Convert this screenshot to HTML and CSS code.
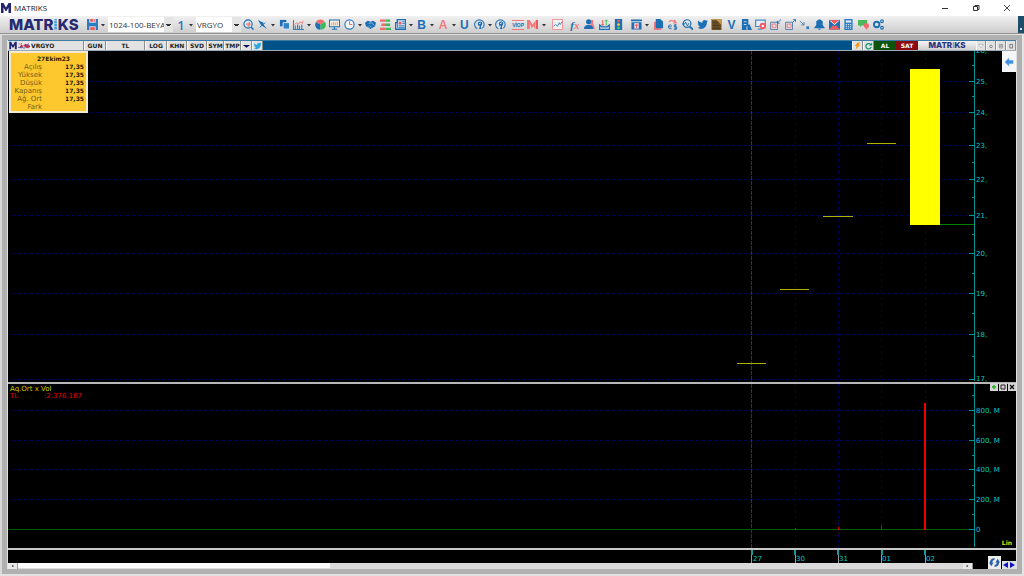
FILE: index.html
```html
<!DOCTYPE html>
<html lang="tr">
<head>
<meta charset="utf-8">
<title>MATRIKS</title>
<link rel="stylesheet" href="styles.css">
</head>
<body>
<svg class="defs" aria-hidden="true">
  <symbol id="caret" viewBox="0 0 4 12"><path d="M0 5h4L2 7.500z" fill="#333"/></symbol>
  <symbol id="m" viewBox="0 0 12 12"><path d="M1 11V1h2.500L6 5.500 8.500 1H11v10H8.500V5.500L6.500 9h-1L3.500 5.500V11z" fill="#22256f"/></symbol>
  <symbol id="bird" viewBox="0 0 12 12"><path d="M0.500 9.300c1.200.2 2.300-.1 3.100-.8C2.600 8.400 1.900 7.700 1.600 6.900h1C1.500 6.600.8 5.600.8 4.500l1 .3C.8 4 .6 2.700 1.200 1.700 2.400 3.200 4 4 5.900 4.200 5.500 2.500 6.700 1 8.300 1c.7 0 1.300.3 1.700.8L11.600 1.200 10.700 2.600 12 2.300 10.900 3.500C11 7.500 8 10.800 4.300 10.800c-1.400 0-2.700-.5-3.800-1.500z" fill="currentColor"/></symbol>
  <symbol id="face" viewBox="0 0 12 12"><path d="M3.500 10.700A5.200 5.200 0 1 1 9 10.200" fill="none" stroke="#3a7fbb" stroke-width="1.300"/><path d="M4 5Q4.500 2.500 7.500 2.800 10 4 8.500 6.500L7.500 8l.5 3H5.500L6.500 7 5 7.500z" fill="#1c6fb5"/><path d="M5.500 5.200l2-1" stroke="#e6eef5" fill="none"/></symbol>
</svg>

<header class="titlebar">
  <svg class="app-icon"><use href="#m"/></svg>
  <span class="app-title">MATRIKS</span>
  <div class="win-buttons">
    <button aria-label="Minimize"><svg viewBox="0 0 12 12"><path d="M3 6.500h6" stroke="#333" fill="none"/></svg></button>
    <button aria-label="Restore"><svg viewBox="0 0 12 12"><path d="M3.500 4.500h4v4h-4zM5 4.500v-1h4v4H8" stroke="#333" fill="none"/></svg></button>
    <button aria-label="Close"><svg viewBox="0 0 12 12"><path d="M3 3l6 6M9 3L3 9" stroke="#333" stroke-width=".9" fill="none"/></svg></button>
  </div>
</header>

<nav class="toolbar" aria-label="Araçlar">
  <div class="brand">MATR<span class="brand-i">I</span>KS</div>
  <div class="pickers">
    <button class="save" aria-label="Kaydet"><svg viewBox="0 0 12 12"><path d="M0 0h2.500v4h7V0H12v12H9.500V8h-7v4H0z" fill="#2b7cc2"/><path d="M3.500 0h3v3h-3zM7.500 0h1v3h-1zM3.500 9h5v3h-5z" fill="#ef5a5f"/><path d="M2 4.500h8v3H2z" fill="#2b7cc2"/></svg></button>
    <button class="caret" aria-label="Menü"><svg><use href="#caret"/></svg></button>
    <select class="picker picker-wide" aria-label="Sayfa"><option>1024-100-BEYAZ</option></select>
    <button class="page-number">1</button>
    <button class="caret" aria-label="Menü"><svg><use href="#caret"/></svg></button>
    <select class="picker picker-symbol" aria-label="Sembol"><option>VRGYO</option></select>
  </div>
  <div class="tools">
    <button aria-label="Büyüt"><svg viewBox="0 0 12 12"><circle cx="5.500" cy="5.500" r="4.500" fill="#dceaf5" stroke="#1c6fb5" stroke-width="1.200"/><path d="M9 9l2.500 2.500" stroke="#1c6fb5" stroke-width="1.600"/><path d="M3.500 5.500h4l-1-2M5 7.500h2.500" stroke="#ef6a6e" fill="none" stroke-width="1.400"/></svg></button>
    <button aria-label="İmleç"><svg viewBox="0 0 12 12"><path d="M1 1l6 3 0 2 4 5-6-4-1-1z" fill="#1c6fb5"/><path d="M9 4L3 9" stroke="#1c6fb5"/></svg></button>
    <button class="caret" aria-label="Menü"><svg><use href="#caret"/></svg></button>
    <button aria-label="Kopyala"><svg viewBox="0 0 12 12"><path d="M1 1h7v7H1z" fill="#1c6fb5"/><path d="M4.500 4h7v7h-7z" fill="#3182c6" stroke="#e8eef4"/></svg></button>
    <button aria-label="Grafik"><svg viewBox="0 0 12 12"><path d="M.5 1v10.500H12M2.500 11V7M5 11V6M7 11V7M9.500 11V6" fill="none" stroke="#3d80b8" stroke-width="1.200"/><path d="M2 6l2-2 2 1.500L8 3l2 2 1-3" stroke="#f0777a" fill="none"/></svg></button>
    <button class="caret" aria-label="Menü"><svg><use href="#caret"/></svg></button>
    <button aria-label="Pasta grafik"><svg viewBox="0 0 12 12"><path d="M6 6L1 3.500A5.500 5.500 0 0 1 10.500 3z" fill="#f06a6e"/><path d="M6 6L1 3.500A5.500 5.500 0 0 0 6 11.800z" fill="#1c6fb5"/><path d="M6 6L10.800 3A5.600 5.600 0 0 1 6 11.800z" fill="#3cba59"/></svg></button>
    <button aria-label="Ekran"><svg viewBox="0 0 12 12"><path d="M.5 1h11v7.500H.5zM6 8.500V11M3 11.300h6" fill="#f6f0e8" stroke="#1c6fb5" stroke-width="1.100"/><path d="M3 7V4M5 7V3M7 7V4M9 7V3" stroke="#ef9c4a"/></svg></button>
    <button aria-label="Zaman"><svg viewBox="0 0 12 12"><circle cx="6" cy="6" r="5" fill="#f3f6f9" stroke="#2b7cc2" stroke-width="1.300"/><path d="M6 2.500V6h3" stroke="#ef5a5f" fill="none"/></svg></button>
    <button class="caret" aria-label="Menü"><svg><use href="#caret"/></svg></button>
    <button aria-label="İşlem"><svg viewBox="0 0 12 12"><path d="M0 4l3-2 3 1 3-1 3 2-1 4-5 3-5-3z" fill="#1c6fb5"/><path d="M4 5l3-1 3 3M3 8l2 2M5 7l2 2" stroke="#cfe0ee" stroke-width=".7" fill="none"/></svg></button>
    <button aria-label="Derinlik"><svg viewBox="0 0 12 12"><path d="M0 .5h6v2.500H0zM1.500 5h4v2.500h-4zM0 9.500h6V12H0z" fill="#f06a6e"/><path d="M6 .5h5v2.500H6zM5.500 5H11v2.500H5.500zM6 9.500h6V12H6z" fill="#3cba59"/></svg></button>
    <button aria-label="Haberler"><svg viewBox="0 0 12 12"><path d="M2.500.7h9v10.500h-11V4h2z" fill="#d7e6f3" stroke="#1c6fb5" stroke-width="1.500"/><path d="M4 3h3v3H4z" fill="#ef5a5f"/><path d="M8 3h2.500M8 5h2.500M4 7.500h6.500M4 9.500h6.500M2.500 4v6" stroke="#1c6fb5"/></svg></button>
    <button class="caret" aria-label="Menü"><svg><use href="#caret"/></svg></button>
    <button class="letter">B</button>
    <button class="caret" aria-label="Menü"><svg><use href="#caret"/></svg></button>
    <button class="letter letter-red">A</button>
    <button class="caret" aria-label="Menü"><svg><use href="#caret"/></svg></button>
    <button class="letter">U</button>
    <button aria-label="Analiz"><svg><use href="#face"/></svg></button>
    <button class="caret" aria-label="Menü"><svg><use href="#caret"/></svg></button>
    <button aria-label="Uzman"><svg><use href="#face"/></svg></button>
    <button class="viop new-group">VİOP</button>
    <button aria-label="Matriks"><svg viewBox="0 0 12 12"><path d="M0 1l3 0 3 5 3-4v9L7 8 5 10 3 5v6H0z" fill="#f07a7d"/><path d="M9.500 1H12v10H9.500z" fill="#ef5a5f"/></svg></button>
    <button class="caret" aria-label="Menü"><svg><use href="#caret"/></svg></button>
    <button class="new-group" aria-label="Gösterge"><svg viewBox="0 0 12 12"><path d="M.5.5h11v11H.5z" fill="#eef1f4" stroke="#ef8a8c"/><path d="M1.500 8L4 6l2 2 2-4 1 2 2-3" stroke="#4a7eae" fill="none"/></svg></button>
    <button class="fx new-group">f<span class="fx-x">x</span></button>
    <button aria-label="Kullanıcılar"><svg viewBox="0 0 12 12"><path d="M7 1h3v4l2 6H7z" fill="#f07a7d"/><circle cx="5" cy="3" r="2.800" fill="#1c6fb5"/><path d="M0 11q0-4 3.500-4.500h3Q10 7 10 11z" fill="#1c6fb5"/></svg></button>
    <button aria-label="Aktarım"><svg viewBox="0 0 12 12"><path d="M.7 6.500v4.800h10.600V6.500L9 8.500H3z" fill="#d5e3ef" stroke="#1c6fb5" stroke-width="1.300"/><path d="M4 1v6M2.500 5.500L4 7l1.500-1.500" stroke="#ef5a5f" fill="none"/><path d="M8 7V1M6.500 2.500L8 1l1.500 1.500" stroke="#3cba59" fill="none"/></svg></button>
    <button aria-label="Durum"><svg viewBox="0 0 12 12"><path d="M2 0h8v12H2z" fill="#1c6fb5"/><circle cx="6" cy="2.300" r="1.500" fill="#f05a5f"/><circle cx="6" cy="6" r="1.500" fill="#f4d53c"/><circle cx="6" cy="9.700" r="1.500" fill="#46c964"/></svg></button>
    <button class="new-group" aria-label="Arşiv"><svg viewBox="0 0 12 12"><path d="M0 .5h12v2H0zM.5 3.500h11v8H.5z" fill="#1c6fb5"/><path d="M3.500 4.500h5v6h-5z" fill="#f3d5d8"/><path d="M6 10V6M4.300 7.500L6 5.700l1.700 1.800" stroke="#ef5a5f" fill="none"/></svg></button>
    <button class="caret" aria-label="Menü"><svg><use href="#caret"/></svg></button>
    <button aria-label="Belgeler"><svg viewBox="0 0 12 12"><path d="M1 3h8v9H1z" fill="#f07a7d"/><path d="M3 0h5l3 3v7H3z" fill="#1c6fb5"/></svg></button>
    <button aria-label="Döviz"><svg viewBox="0 0 12 12"><path d="M2 3q3-3 8 1M8 1l2 3-3 .5" stroke="#f07a7d" fill="none" stroke-width="1.200"/><path d="M5 10.500H2.500Q1 9 2 7q2-1.500 3 .5l-1 1H2M10.500 6.500H8V8.500h2.500V11H7.500M9 5.500V12" stroke="#1c6fb5" fill="none"/></svg></button>
    <button aria-label="Ara"><svg viewBox="0 0 12 12"><circle cx="5.500" cy="5" r="4.200" fill="none" stroke="#1c6fb5" stroke-width="1.300"/><path d="M8.500 8.500L12 11.500" stroke="#1c6fb5" stroke-width="2"/><path d="M0 5.500h3l1-2 2 4 1.500-3" stroke="#1c6fb5" fill="none"/></svg></button>
    <button class="blue" aria-label="Twitter"><svg><use href="#bird"/></svg></button>
    <button aria-label="Resim"><svg viewBox="0 0 12 12"><path d="M0 0h12v12H0z" fill="#c09a4c"/><path d="M1 1h5l5 5v6H1z" fill="#6b5026"/><path d="M2 4h5M2 7h7M2 10h8" stroke="#46351a"/></svg></button>
    <button class="letter">V</button>
    <button aria-label="Şirketler"><svg viewBox="0 0 12 12"><path d="M1 0h7v12H1zM8 6h1.500l2.500 6H8z" fill="#1c6fb5"/><path d="M3 3h3M3 6h3M6.500 12V8" stroke="#cfe0ee"/></svg></button>
    <button aria-label="Ekran kaydı"><svg viewBox="0 0 12 12"><path d="M.7 1.200h10.500v7H.7zM3 11h5" fill="#e4edf5" stroke="#4a8cc4" stroke-width="1.300"/><circle cx="8.500" cy="7.500" r="3.500" fill="#f05a64"/><circle cx="8.500" cy="7.500" r="1.300" fill="#fff"/></svg></button>
    <button aria-label="Küçült"><svg viewBox="0 0 12 12"><path d="M.7 3.500h7.500v8H.7z" fill="#e5dce0" stroke="#4a7eae"/><path d="M2.500 5.500h4v4h-4z" fill="none" stroke="#f07a7d"/><path d="M12 .5L8.500 4M8 2v2.500h2.500" stroke="#1c6fb5" fill="none"/></svg></button>
    <button aria-label="Genişlet"><svg viewBox="0 0 12 12"><path d="M.7 3.500h7.500v8H.7z" fill="#e5dce0" stroke="#4a7eae"/><path d="M2.500 5.500h4v4h-4z" fill="none" stroke="#f07a7d"/><path d="M8 4l3.500-3.500M9 .7h2.500V3" stroke="#1c6fb5" fill="none"/></svg></button>
    <button aria-label="Taşı"><svg viewBox="0 0 12 12"><path d="M1 2l4.500 4.500M5.500 3.500v3H2.500" stroke="#3d80b8" fill="none"/><path d="M8 8h3v3H8z" fill="#2b7cc2"/></svg></button>
    <button aria-label="Alarm"><svg viewBox="0 0 12 12"><path d="M5 .5h2l2.500 2v4L12 10H0l2.500-3.500v-4zM4 10.500h4L6 12z" fill="#1c6fb5"/></svg></button>
    <button aria-label="Mesaj"><svg viewBox="0 0 12 12"><path d="M0 1h12v10.500H0z" fill="#1c6fb5"/><path d="M.5 1.500h11L6 6.500z" fill="#f3f3f3"/><path d="M0 11.500l4.500-5L6 8l1.500-1.500 4.500 5zM1 1l5 4.500L11 1" fill="#ef5a5f"/></svg></button>
    <button aria-label="Hesap makinesi"><svg viewBox="0 0 12 12"><path d="M1.500 0h9v12h-9z" fill="#2b7cc2"/><path d="M3 1.500h6v2.500H3z" fill="#d9e8f4"/><path d="M3 6h6M3 8h6M3 10h6" stroke="#d9e8f4" stroke-dasharray="1.400 .9"/></svg></button>
    <button aria-label="Sohbet"><svg viewBox="0 0 12 12"><path d="M0 1h10v6H4L2 9V7H0z" fill="#4cb85c"/><path d="M7 5q5-1 5 2t-2 3v2L8 10Q5 8 7 5z" fill="#f06a6e"/></svg></button>
    <button aria-label="Ayarlar"><svg viewBox="0 0 12 12"><circle cx="4" cy="6" r="3" fill="none" stroke="#1c6fb5" stroke-width="2"/><circle cx="9.800" cy="2.500" r="1.500" fill="none" stroke="#1c6fb5" stroke-width="1.200"/><circle cx="9.800" cy="9.500" r="1.500" fill="none" stroke="#1c6fb5" stroke-width="1.200"/></svg></button>
  </div>
  <div class="toolbar-grip"></div>
</nav>

<main class="workspace">
  <section class="chart-window">
    <div class="chart-header">
      <svg class="head-m"><use href="#m"/></svg>
      <svg class="head-pair" viewBox="0 0 13 8"><path d="M0 1l2 2 2-2v2L2 5v2h2l2-3 2-2 2 1 3 1v2l-3 1z" fill="#c33049"/><path d="M4 6l3 1 3-4 2-1M0 6h4" stroke="#5a5fae" fill="none"/></svg>
      <button class="cell cell-name">VRGYO</button>
      <button class="cell cell-gun">GUN</button>
      <button class="cell cell-tl">TL</button>
      <button class="cell cell-gun">LOG</button>
      <button class="cell cell-mid">KHN</button>
      <button class="cell cell-mid">SVD</button>
      <button class="cell cell-small">SYM</button>
      <button class="cell cell-small">TMP</button>
      <button class="cell cell-icon" aria-label="Liste"><svg viewBox="0 0 10 8"><path d="M1 3h8L5 6z" fill="#111155"/></svg></button>
      <button class="cell cell-icon sky" aria-label="Paylaş"><svg><use href="#bird"/></svg></button>
      <span class="spacer"></span>
      <button class="cell cell-icon" aria-label="Hızlı emir"><svg viewBox="0 0 10 8"><path d="M5 0h3L6.500 3H8L3 8l1-4H2z" fill="#f29a1f"/></svg></button>
      <button class="cell cell-icon" aria-label="Yenile"><svg viewBox="0 0 10 8"><path d="M7.500 2.500A3 3 0 1 0 8 5" stroke="#159a72" stroke-width="1.400" fill="none"/><path d="M5.500 3.500H9V0z" fill="#159a72"/></svg></button>
      <button class="trade buy">AL</button>
      <button class="trade sell">SAT</button>
      <span class="mini-brand">MATR<span class="mini-i">I</span>KS</span>
      <button class="cell cell-win" aria-label="Menü"><svg viewBox="0 0 10 8"><path d="M2 2h6L5 6z" fill="#fff" stroke="#999" stroke-width=".7"/></svg></button>
      <button class="cell cell-win" aria-label="Simge"><svg viewBox="0 0 10 8"><circle cx="5" cy="4.500" r="1.600" fill="none" stroke="#777"/></svg></button>
      <button class="cell cell-win" aria-label="Büyüt"><svg viewBox="0 0 10 8"><path d="M3 2h4v4.500H3zM5 2v4M3 4h4" fill="none" stroke="#888" stroke-width=".8"/></svg></button>
      <button class="cell cell-win" aria-label="Kapat"><svg viewBox="0 0 10 8"><path d="M3.500 2H7v4.500H3.500z" fill="none" stroke="#666"/></svg></button>
    </div>

    <div class="price-pane">
      <svg class="plot" viewBox="8 51 1008 331" preserveAspectRatio="xMaxYMin" role="img" aria-label="VRGYO fiyat grafiği">
        <g class="grid">
          <path d="M12 81.500H968M12 112.500H968M12 145.500H968M12 179.500H968M12 215.500H968M12 253.500H968M12 293.500H968M12 334.500H968M12 379.500H968"/>
          <path d="M795.500 51V382M838.500 51V382M881.500 51V382M925.500 51V382"/>
        </g>
        <path class="cursor-line" d="M751.500 51V382"/>
        <path class="dash" d="M737 363.500h29M780 289.500h29M823 216.500h30M867 143.500h29"/>
        <rect x="910" y="69" width="30" height="156" fill="#ffff00"/>
        <path d="M940 224.500H974" stroke="#008000"/>
        <path class="axis" d="M974.500 51V381M969 81.500h5M969 112.500h5M969 145.500h5M969 179.500h5M969 215.500h5M969 253.500h5M969 293.500h5M969 334.500h5M969 379.500h5"/>
        <path class="axis" d="M972 65.500h2M972 96.500h2M972 128.500h2M972 162.500h2M972 197.500h2M972 234.500h2M972 273.500h2M972 313.500h2M972 356.500h2"/>
        <g class="scale">
          <text x="976" y="53">26,</text>
          <text x="976" y="84">25,</text>
          <text x="976" y="115">24,</text>
          <text x="976" y="148">23,</text>
          <text x="976" y="182">22,</text>
          <text x="976" y="218">21,</text>
          <text x="976" y="256">20,</text>
          <text x="976" y="296">19,</text>
          <text x="976" y="337">18,</text>
          <text x="976" y="381">17,</text>
        </g>
      </svg>
      <table class="quote-box">
        <caption>27Ekim23</caption>
        <tr><th>Açılış</th><td>17,35</td></tr>
        <tr><th>Yüksek</th><td>17,35</td></tr>
        <tr><th>Düşük</th><td>17,35</td></tr>
        <tr><th>Kapanış</th><td>17,35</td></tr>
        <tr><th>Ağ. Ort</th><td>17,35</td></tr>
        <tr><th>Fark</th><td></td></tr>
      </table>
      <button class="side-toggle" aria-label="Paneli aç"><svg viewBox="0 0 12 12"><path d="M1 6l5-5v3h5v4H6v3z" fill="#3d8fe0" stroke="#8cbcec" stroke-width=".6"/></svg></button>
    </div>

    <div class="volume-pane">
      <svg class="plot" viewBox="8 384 1008 164" preserveAspectRatio="xMaxYMin" role="img" aria-label="Hacim grafiği">
        <g class="grid">
          <path d="M12 410.500H968M12 440.500H968M12 469.500H968M12 499.500H968"/>
          <path d="M795.500 384V548M838.500 384V548M881.500 384V548M925.500 384V548"/>
        </g>
        <path class="cursor-line" d="M751.500 384V548"/>
        <path d="M8 529.500H974" stroke="#005c00"/>
        <path d="M795.500 528v2M838.500 527v3M881.500 525v5" stroke="#e00000"/>
        <path d="M925 403V530" stroke="#f00000" stroke-width="2"/>
        <path class="axis" d="M974.500 384V547M969 410.500h5M969 440.500h5M969 469.500h5M969 499.500h5M969 529.500h5"/>
        <path class="axis" d="M972 395.500h2M972 425.500h2M972 455.500h2M972 485.500h2M972 514.500h2"/>
        <g class="scale">
          <text x="976" y="413">800, M</text>
          <text x="976" y="443">600, M</text>
          <text x="976" y="472">400, M</text>
          <text x="976" y="502">200, M</text>
          <text x="976" y="532">0</text>
        </g>
      </svg>
      <div class="legend">
        <div class="legend-title">Aq.Ort x Vol</div>
        <div class="legend-value"><span class="legend-unit">TL</span><span>:2.376.187</span></div>
      </div>
      <div class="pane-buttons">
        <button aria-label="Ekle"><svg viewBox="0 0 8 8"><path d="M4 2v4M2 4h4" stroke="#19b519" stroke-width="1.400"/></svg></button>
        <button aria-label="Büyüt"><svg viewBox="0 0 8 8"><path d="M2 2h4v4H2z" stroke="#222" fill="none"/></svg></button>
        <button aria-label="Kapat"><svg viewBox="0 0 8 8"><path d="M2 2l4 4M6 2L2 6" stroke="#111" stroke-width="1.400"/></svg></button>
      </div>
      <button class="scale-mode">Lin</button>
    </div>

    <div class="time-pane">
      <svg class="time-axis" viewBox="8 550 1008 13" role="img" aria-label="Tarih ekseni">
        <path d="M751.500 554V563M795.500 554V563M838.500 554V563M881.500 554V563M925.500 554V563" stroke="#999"/>
        <path d="M752 550v5M795 550v5M838 550v5M882 550v5M925 550v5" stroke="#159a9a" stroke-width="2"/>
        <g class="scale">
          <text x="753" y="561">27</text>
          <text x="796" y="561">30</text>
          <text x="839" y="561">31</text>
          <text x="882" y="561">01</text>
          <text x="926" y="561">02</text>
        </g>
      </svg>
      <div class="scroll-row">
        <button aria-label="Sola kaydır"><svg viewBox="0 0 10 6"><path d="M6 1.500v3L4 3z" fill="#222"/></svg></button>
        <div class="track"><div class="thumb"></div></div>
        <button aria-label="Sağa kaydır"><svg viewBox="0 0 10 6"><path d="M4 1.500v3L6 3z" fill="#222"/></svg></button>
      </div>
      <div class="corner">
        <button class="sync" aria-label="Yenile"><svg viewBox="0 0 12 12"><path d="M6 1Q1 1.500 1 6L0 6l2.500 4L5 6H3.500Q3.500 3.500 6 3z" fill="#2b62a8"/><path d="M6 11Q11 10.500 11 6l1 0-2.500-4L7 6h1.500Q8.500 8.500 6 9z" fill="#2b62a8"/></svg></button>
        <button class="step" aria-label="Önceki"><svg viewBox="0 0 7 8"><path d="M6 1v6L1 4z" fill="#1010c8"/></svg></button>
        <button class="step" aria-label="Sonraki"><svg viewBox="0 0 7 8"><path d="M1 1v6L6 4z" fill="#1010c8"/></svg></button>
      </div>
    </div>
  </section>
</main>
</body>
</html>
```

FILE: styles.css
```css
* { box-sizing: border-box; }

body {
  margin: 0;
  height: 100vh;
  display: flex;
  flex-direction: column;
  overflow: hidden;
  background: #e2e2e2;
  font-family: "DejaVu Sans", sans-serif;
  font-size: 7px;
}

button {
  margin: 0;
  padding: 0;
  border: 0;
  background: none;
  font: inherit;
  color: inherit;
}

svg { display: block; }
.defs { position: absolute; width: 0; height: 0; }

/* title bar */
.titlebar {
  flex: none;
  height: 16px;
  display: flex;
  align-items: center;
  background: #fff;
}
.app-icon { width: 12px; height: 12px; }
.app-title {
  margin-left: 2px;
  font: 8px/16px "Open Sans", sans-serif;
  color: #222;
}
.win-buttons { margin-left: auto; display: flex; gap: 19px; padding-right: 11px; }
.win-buttons svg { width: 12px; height: 12px; }

/* toolbar */
.toolbar {
  flex: none;
  height: 18px;
  display: flex;
  align-items: center;
  padding-left: 9px;
  background: linear-gradient(#f1f1f1, #cdcdcd);
  border-bottom: 1px solid #8e8e8e;
}
.brand {
  width: 78px;
  font: 800 15px/17px Inter, sans-serif;
  color: #26296f;
}
.brand-i {
  color: transparent;
  background: repeating-linear-gradient(#3aa0dc 0 2px, #8fc6e8 2px 3px);
  -webkit-background-clip: text;
  background-clip: text;
}
.pickers { display: flex; align-items: center; gap: 3px; }
.save svg { width: 11px; height: 11px; }
.pickers .caret { width: 4px; }
.caret svg { width: 4px; height: 12px; }
.picker {
  appearance: none;
  height: 15px;
  border: 0;
  border-radius: 0;
  margin: 0;
  color: #333;
  font: 8px/15px "Open Sans", sans-serif;
  background:
    linear-gradient(#333, #333) right 3px top 8px / 3px 1px no-repeat,
    linear-gradient(#333, #333) right 2px top 7px / 5px 1px no-repeat,
    linear-gradient(#e4e4e4, #e4e4e4) right / 9px 100% no-repeat,
    #fff;
}
.picker-wide { width: 65px; padding: 0 9px 0 1px; }
.picker-symbol { width: 45px; padding: 0 9px 0 1px; }
.page-number {
  width: 10px;
  font: 600 13px/16px "Open Sans", sans-serif;
  color: #2b7cc2;
}
.tools {
  flex: 0 1 643px;
  margin-left: 1px;
  display: flex;
  align-items: center;
  justify-content: space-between;
}
.tools button {
  width: 12px;
  height: 16px;
  display: flex;
  align-items: center;
  justify-content: center;
}
.tools button svg { width: 11px; height: 11px; }
.tools .caret { width: 4px; }
.tools .caret svg { width: 4px; height: 12px; }
.tools .new-group { margin-left: 3px; }
.tools .letter { font: 700 12px/16px "Liberation Sans", sans-serif; color: #1c6fb5; }
.tools .letter-red { color: #f07a7d; }
.tools .blue { color: #1c6fb5; }
.tools .viop {
  height: 10px;
  font: 700 5px/8px "Liberation Sans", sans-serif;
  color: #1c6fb5;
  border-top: 1px solid #f07a7d;
  border-bottom: 1px solid #f07a7d;
}
.tools .fx { font: italic 700 11px/16px "Liberation Serif", serif; color: #1c6fb5; }
.fx-x { color: #f07a7d; }
.toolbar-grip {
  align-self: stretch;
  margin-left: auto;
  width: 6px;
  background:
    linear-gradient(#d5e2ea, #d5e2ea) left 2px bottom 3px / 2px 2px no-repeat,
    #1d4d68;
}

/* framed workspace */
.workspace {
  flex: 1;
  min-height: 0;
  display: flex;
  margin-bottom: 2px;
  padding: 5px;
  background: #b0b0b0;
  border-top: 1px solid #e4e4e4;
  border-left: 2px solid #d8d8d8;
  border-right: 2px solid #e4e4e4;
}
.chart-window {
  flex: 1;
  min-width: 0;
  display: flex;
  flex-direction: column;
  background: #000;
  border-left: 1px solid #e0e0e0;
  border-right: 1px solid #e0e0e0;
}

/* chart header */
.chart-header {
  flex: none;
  height: 11px;
  display: flex;
  background: #00528a;
  border-top: 1px solid #3e7ba5;
  border-bottom: 1px solid #9aacb8;
  font-size: 6px;
  font-weight: 700;
  line-height: 9px;
  color: #222;
}
.head-m { width: 10px; height: 9px; background: #e6e6e6; }
.head-pair { width: 12px; height: 9px; background: #e6e6e6; }
.cell {
  background: #e2e2e2;
  border-right: 1px solid #8c8c8c;
  border-left: 1px solid #f6f6f6;
  text-align: center;
}
.cell-name { width: 54px; text-align: left; }
.cell-gun { width: 22px; }
.cell-tl { width: 39px; }
.cell-mid { width: 20px; }
.cell-small { width: 17px; }
.cell-icon { width: 11px; }
.cell-icon svg { width: 9px; height: 8px; }
.cell-win { width: 10px; }
.cell-win svg { width: 8px; height: 8px; }
.sky { color: #2aa9e0; }
.spacer { flex: 1; }
.trade { width: 22px; color: #fff; }
.buy { background: #0d520d; }
.sell { background: #8a0a0f; }
.mini-brand {
  width: 58px;
  text-align: center;
  background: linear-gradient(#f4f4f4, #cfcfcf);
  font: 800 8px/9px Inter, sans-serif;
  color: #2c2f7c;
}
.mini-i { color: #45a6de; }

/* plots */
.price-pane { flex: 331; min-height: 0; position: relative; }
.volume-pane {
  flex: 164;
  min-height: 0;
  position: relative;
  border-top: 2px solid #b8b8b8;
  border-bottom: 2px solid #c8c8c8;
  box-sizing: content-box;
}
.plot { width: 100%; height: 100%; }
.grid { fill: none; stroke: #000058; stroke-dasharray: 3 3; }
.cursor-line { fill: none; stroke: #7a1038; stroke-dasharray: 4 1; }
.dash { fill: none; stroke: #b0b000; }
.axis { fill: none; stroke: #009494; }
.scale { fill: #00caca; font-size: 7px; }

.quote-box {
  position: absolute;
  left: 1px;
  top: 0;
  height: 62px;
  padding: 2px 2px 1px 0;
  border: 2px solid #f3ead0;
  background: #fcc82d;
  border-spacing: 0;
  font-size: 7px;
  line-height: 8px;
  display: grid;
  justify-content: end;
}
.quote-box caption {
  display: block;
  padding-left: 12px;
  font-size: 6px;
  font-weight: 700;
  color: #2a2000;
}
.quote-box th {
  width: 31px;
  padding: 0;
  font-weight: 400;
  text-align: right;
  color: #75601c;
}
.quote-box td {
  width: 42px;
  padding: 0;
  font-size: 6px;
  font-weight: 700;
  text-align: right;
  color: #1c1600;
}
.side-toggle {
  position: absolute;
  right: 0;
  top: 0;
  width: 14px;
  height: 21px;
  background: #f4f6f8;
}
.side-toggle svg { width: 10px; height: 12px; margin: auto; }

.legend { position: absolute; left: 2px; top: 2px; line-height: 7px; }
.legend-title { color: #d0d000; }
.legend-value { display: flex; color: #e00000; }
.legend-unit { width: 34px; }
.pane-buttons { position: absolute; right: 0; top: -1px; display: flex; gap: 1px; }
.pane-buttons button { width: 8px; height: 8px; background: #d4d4d4; }
.pane-buttons svg { width: 8px; height: 8px; }
.scale-mode {
  position: absolute;
  right: 4px;
  bottom: 1px;
  font-size: 6px;
  font-weight: 700;
  line-height: 8px;
  color: #e0e000;
}

/* time axis and scroll bar */
.time-pane { flex: none; position: relative; }
.time-axis { width: 100%; }
.scroll-row { height: 6px; margin-right: 43px; display: flex; }
.scroll-row button { width: 10px; background: #e8e8e8; border-right: 1px solid #999; }
.scroll-row svg { width: 9px; height: 6px; }
.track { flex: 1; background: #dadada; }
.thumb { width: 33%; height: 5px; background: #fafafa; }
.corner {
  position: absolute;
  right: 0;
  bottom: 0;
  display: flex;
  align-items: flex-end;
}
.sync { width: 13px; height: 13px; margin-right: 1px; background: #ececec; }
.sync svg { width: 11px; height: 11px; margin: auto; }
.step { width: 7px; height: 8px; background: #e0e0e0; }
.step svg { width: 7px; height: 8px; }
```
